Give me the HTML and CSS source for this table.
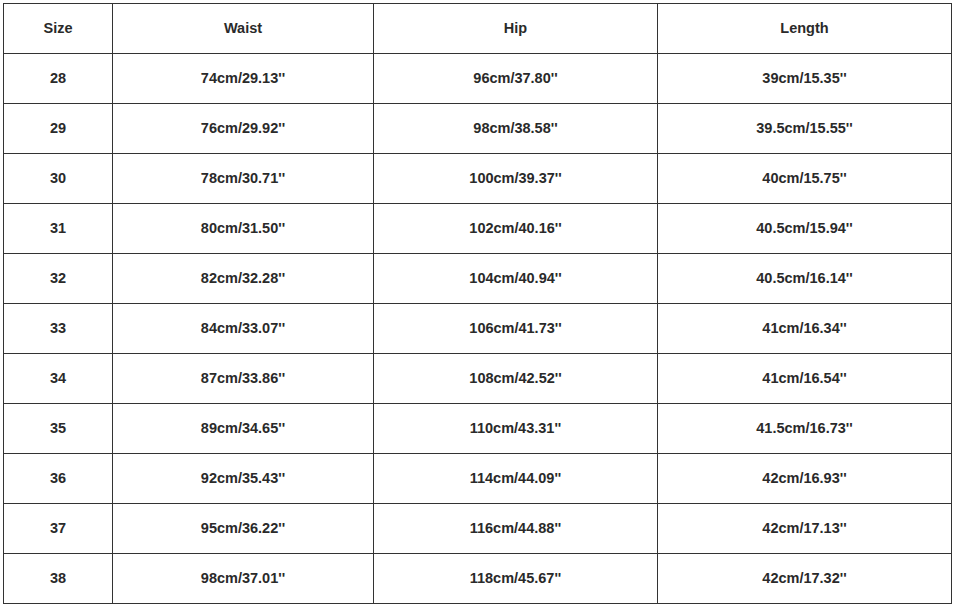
FILE: index.html
```html
<!DOCTYPE html>
<html>
<head>
<meta charset="utf-8">
<link rel="stylesheet" href="styles.css">
</head>
<body>
<table class="size-table">
  <colgroup>
    <col class="c-size"><col class="c-waist"><col class="c-hip"><col class="c-length">
  </colgroup>
  <tr><td>Size</td><td>Waist</td><td>Hip</td><td>Length</td></tr>
  <tr><td>28</td><td>74cm/29.13''</td><td>96cm/37.80''</td><td>39cm/15.35''</td></tr>
  <tr><td>29</td><td>76cm/29.92''</td><td>98cm/38.58''</td><td>39.5cm/15.55''</td></tr>
  <tr><td>30</td><td>78cm/30.71''</td><td>100cm/39.37''</td><td>40cm/15.75''</td></tr>
  <tr><td>31</td><td>80cm/31.50''</td><td>102cm/40.16''</td><td>40.5cm/15.94''</td></tr>
  <tr><td>32</td><td>82cm/32.28''</td><td>104cm/40.94''</td><td>40.5cm/16.14''</td></tr>
  <tr><td>33</td><td>84cm/33.07''</td><td>106cm/41.73''</td><td>41cm/16.34''</td></tr>
  <tr><td>34</td><td>87cm/33.86''</td><td>108cm/42.52''</td><td>41cm/16.54''</td></tr>
  <tr><td>35</td><td>89cm/34.65''</td><td>110cm/43.31''</td><td>41.5cm/16.73''</td></tr>
  <tr><td>36</td><td>92cm/35.43''</td><td>114cm/44.09''</td><td>42cm/16.93''</td></tr>
  <tr><td>37</td><td>95cm/36.22''</td><td>116cm/44.88''</td><td>42cm/17.13''</td></tr>
  <tr><td>38</td><td>98cm/37.01''</td><td>118cm/45.67''</td><td>42cm/17.32''</td></tr>
</table>
</body>
</html>
```
FILE: styles.css
```css
html, body {
  margin: 0;
  padding: 0;
  background: #fff;
}
body {
  padding: 3px 0 0 3px;
}
.size-table {
  border-collapse: collapse;
  table-layout: fixed;
  width: 948px;
  font-family: "Liberation Sans", Arial, sans-serif;
  font-weight: bold;
  font-size: 14.5px;
  color: #2a2a2a;
}
.c-size { width: 109px; }
.c-waist { width: 261px; }
.c-hip { width: 284px; }
.c-length { width: 294px; }
.size-table tr {
  height: 50px;
}
.size-table td {
  border: 1.5px solid #333;
  text-align: center;
  vertical-align: middle;
  padding: 0 0 2px 0;
}
```
